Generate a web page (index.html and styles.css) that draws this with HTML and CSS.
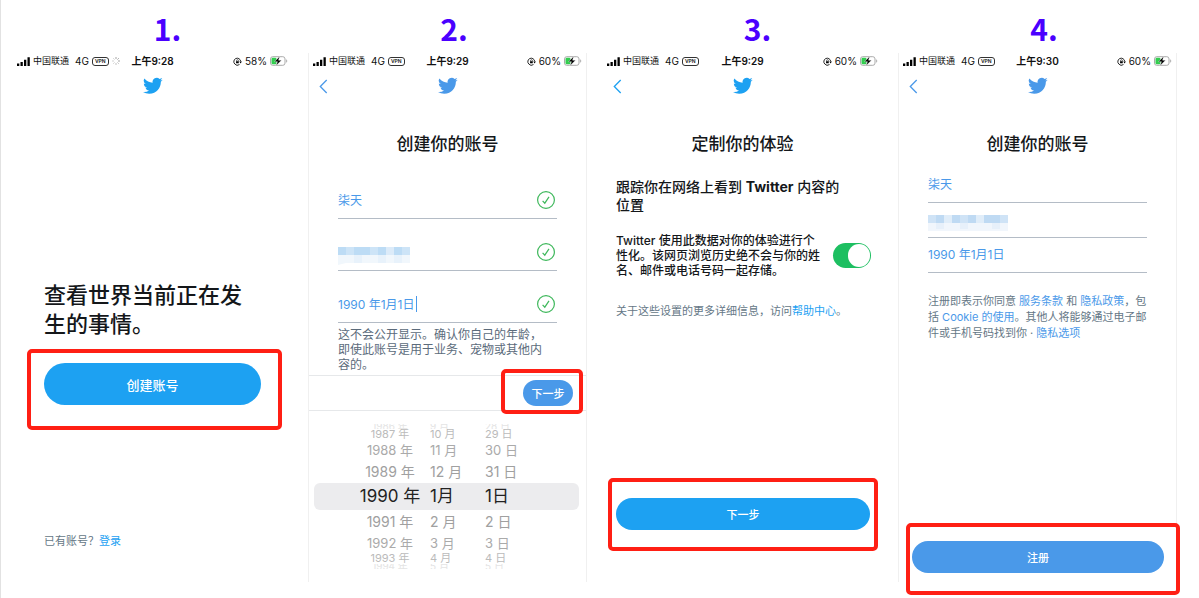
FILE: index.html
```html
<!DOCTYPE html>
<html lang="zh-CN">
<head>
<meta charset="utf-8">
<meta name="viewport" content="width=device-width, initial-scale=1">
<title>创建你的账号</title>
<link rel="stylesheet" href="styles.css">
</head>
<body>
<svg class="sprite" aria-hidden="true">
  <symbol id="bird" viewBox="0 0 24 20"><path d="M23.6 2.4a9.7 9.7 0 0 1-2.8.8A4.8 4.8 0 0 0 23 .5a9.600 9.600 0 0 1-3.100 1.200A4.850 4.850 0 0 0 11.600 6.100 13.800 13.800 0 0 1 1.700 1a4.850 4.850 0 0 0 1.500 6.500 4.800 4.800 0 0 1-2.200-.6v.1a4.850 4.850 0 0 0 3.900 4.800 4.900 4.900 0 0 1-2.200.1 4.850 4.850 0 0 0 4.500 3.400A9.700 9.700 0 0 1 0 17.200a13.700 13.700 0 0 0 7.500 2.200c9 0 13.900-7.400 13.900-13.900v-.6a10 10 0 0 0 2.200-2.500z"/></symbol>
  <symbol id="signal" viewBox="0 0 13 9"><path d="M0 6.500h2.300V9H0zM3.500 5h2.300v4H3.500zM7 2.700h2.300V9H7zM10.500.3h2.300V9h-2.300z"/></symbol>
  <symbol id="lock" viewBox="0 0 10 10"><path d="M2 7.800A3.800 3.800 0 1 1 8.500 4.800M2 7.800a3.800 3.800 0 0 0 5.200.6" fill="none" stroke="currentColor"/><path d="M7 5h2.900L8.500 7.200zM3.400 4.600h3V7h-3z"/><path d="M4 4.800V4a1 1 0 0 1 2 0v.8" fill="none" stroke="currentColor" stroke-width=".7"/></symbol>
  <symbol id="battery" viewBox="0 0 18 10"><rect x=".5" y=".7" width="14.500" height="8.600" rx="2.200" fill="#fff" stroke="#aaa"/><rect x="1.500" y="1.700" width="5" height="6.600" rx="1.200" fill="#32cd4f"/><path d="M16.200 3.300c1.400.5 1.400 2.900 0 3.400z" fill="#aaa"/><path d="M9.700.3 4.500 5.700h2.900L6 9.800l5.500-5.600H8.600z" stroke="#fff" stroke-width=".4"/></symbol>
  <symbol id="back" viewBox="0 0 9 15"><path d="M7.700 1 1.300 7.500 7.700 14" fill="none" stroke="currentColor" stroke-width="1.300"/></symbol>
  <symbol id="check" viewBox="0 0 18 18"><g fill="none" stroke="#3fb85c" stroke-width="1.200"><circle cx="9" cy="9" r="8.400"/><path d="m5.600 9.800 2.200 2.400 4.200-6.300"/></g></symbol>
  <symbol id="spinner" viewBox="0 0 8 8"><g stroke="#999" stroke-width=".9"><path d="M4 0v2M6.800 1.200 5.400 2.600M8 4H6"/><path d="M6.800 6.800 5.400 5.400M4 8V6" stroke="#bbb"/><path d="M1.200 6.800l1.400-1.400M0 4h2M1.200 1.200l1.400 1.400" stroke="#ccc"/></g></symbol>
</svg>

<main class="board">
  <section class="step">
    <h2 class="step-no wide">1.</h2>
    <div class="phone">
      <header class="status">
        <div class="carrier"><svg class="signal"><use href="#signal"/></svg><span class="operator">中国联通</span><span>4G</span><span class="vpn">VPN</span><svg class="spinner"><use href="#spinner"/></svg></div>
        <time class="clock">上午9:28</time>
        <div class="power"><svg class="lock"><use href="#lock"/></svg><span>58%</span><svg class="battery"><use href="#battery"/></svg></div>
      </header>
      <nav class="nav"><span></span><svg class="bird"><use href="#bird"/></svg></nav>
      <div class="welcome">
        <h1 class="slogan">查看世界当前正在发<br>生的事情。</h1>
        <div class="mark mark-create"><button class="button tall" type="button">创建账号</button></div>
        <p class="signin">已有账号？<a href="#login">登录</a></p>
      </div>
    </div>
  </section>

  <section class="step">
    <h2 class="step-no">2.</h2>
    <div class="phone framed soft">
      <header class="status">
        <div class="carrier"><svg class="signal"><use href="#signal"/></svg><span class="operator">中国联通</span><span>4G</span><span class="vpn">VPN</span></div>
        <time class="clock">上午9:29</time>
        <div class="power"><svg class="lock"><use href="#lock"/></svg><span>60%</span><svg class="battery"><use href="#battery"/></svg></div>
      </header>
      <nav class="nav"><button class="back" type="button" aria-label="返回"><svg><use href="#back"/></svg></button><svg class="bird"><use href="#bird"/></svg></nav>
      <h1 class="title">创建你的账号</h1>
      <form class="fields roomy">
        <div class="field"><input type="text" aria-label="姓名" value="柒天"><svg class="check"><use href="#check"/></svg></div>
        <div class="field">
          <svg class="mosaic" viewBox="0 0 80 18" aria-hidden="true"><path fill="#bddcf5" d="M0 0h72v8H0z"/><path fill="#cde4f7" d="M8 0h8v8H8zM32 0h8v8h-8zM64 0h8v8h-8z"/><path fill="#dcebf9" d="M48 0h8v8h-8z"/><path fill="#f1f7fc" d="M0 8h72v8H8l-8 2z"/><path fill="#e8f2fb" d="M16 8h8v8h-8zM40 8h8v8h-8zM56 8h8v8h-8z"/></svg>
          <svg class="check"><use href="#check"/></svg></div>
        <div class="field"><input class="birth" type="text" aria-label="出生日期" value="1990 年1月1日"><span class="caret"></span><svg class="check"><use href="#check"/></svg></div>
      </form>
      <p class="hint">这不会公开显示。确认你自己的年龄，<br>即使此账号是用于业务、宠物或其他内<br>容的。</p>
      <div class="toolbar"><div class="mark mark-next"><button class="button small" type="button">下一步</button></div></div>
      <ul class="picker">
        <li class="edge"><span>1986 年</span><span>9 月</span><span>28 日</span></li>
        <li class="far"><span>1987 年</span><span>10 月</span><span>29 日</span></li>
        <li class="mid"><span>1988 年</span><span>11 月</span><span>30 日</span></li>
        <li class="near"><span>1989 年</span><span>12 月</span><span>31 日</span></li>
        <li class="current"><span>1990 年</span><span>1月</span><span>1日</span></li>
        <li class="near"><span>1991 年</span><span>2 月</span><span>2 日</span></li>
        <li class="mid"><span>1992 年</span><span>3 月</span><span>3 日</span></li>
        <li class="far"><span>1993 年</span><span>4 月</span><span>4 日</span></li>
        <li class="edge"><span>1994 年</span><span>5 月</span><span>5 日</span></li>
      </ul>
    </div>
  </section>

  <section class="step">
    <h2 class="step-no wide">3.</h2>
    <div class="phone">
      <header class="status">
        <div class="carrier"><svg class="signal"><use href="#signal"/></svg><span class="operator">中国联通</span><span>4G</span><span class="vpn">VPN</span></div>
        <time class="clock">上午9:29</time>
        <div class="power"><svg class="lock"><use href="#lock"/></svg><span>60%</span><svg class="battery"><use href="#battery"/></svg></div>
      </header>
      <nav class="nav"><button class="back" type="button" aria-label="返回"><svg><use href="#back"/></svg></button><svg class="bird"><use href="#bird"/></svg></nav>
      <h1 class="title">定制你的体验</h1>
      <div class="custom">
        <h2 class="subtitle">跟踪你在网络上看到 <b>Twitter</b> 内容的<br>位置</h2>
        <div class="setting">
          <label for="track">Twitter 使用此数据对你的体验进行个<br>性化。该网页浏览历史绝不会与你的姓<br>名、邮件或电话号码一起存储。</label>
          <input class="switch" id="track" type="checkbox" role="switch" checked>
        </div>
        <p class="more">关于这些设置的更多详细信息，访问<a href="#help">帮助中心</a>。</p>
      </div>
      <div class="bottom raised"><div class="mark mark-step"><button class="button" type="button">下一步</button></div></div>
    </div>
  </section>

  <section class="step">
    <h2 class="step-no">4.</h2>
    <div class="phone framed soft">
      <header class="status">
        <div class="carrier"><svg class="signal"><use href="#signal"/></svg><span class="operator">中国联通</span><span>4G</span><span class="vpn">VPN</span></div>
        <time class="clock">上午9:30</time>
        <div class="power"><svg class="lock"><use href="#lock"/></svg><span>60%</span><svg class="battery"><use href="#battery"/></svg></div>
      </header>
      <nav class="nav"><button class="back" type="button" aria-label="返回"><svg><use href="#back"/></svg></button><svg class="bird"><use href="#bird"/></svg></nav>
      <h1 class="title">创建你的账号</h1>
      <form class="fields">
        <div class="field"><input type="text" aria-label="姓名" value="柒天"></div>
        <div class="field">
          <svg class="mosaic" viewBox="0 0 80 18" aria-hidden="true"><path fill="#cfe3f6" d="M0 0h80v8H0z"/><path fill="#bfdaf3" d="M8 0h8v8H8zM24 0h8v8h-8zM40 0h8v8h-8zM56 0h16v8H56z"/><path fill="#e0edf9" d="M16 0h8v8h-8zM48 0h8v8h-8z"/><path fill="#f1f6fc" d="M0 8h80v8H0z"/><path fill="#e7f0fa" d="M8 8h8v6H8zM32 8h8v6h-8zM64 8h8v6h-8z"/></svg></div>
        <div class="field"><input type="text" aria-label="出生日期" value="1990 年1月1日"></div>
      </form>
      <p class="terms">注册即表示你同意 <a href="#tos">服务条款</a> 和 <a href="#privacy">隐私政策</a>，包<br>括 <a href="#cookie">Cookie 的使用</a>。其他人将能够通过电子邮<br>件或手机号码找到你 · <a href="#options">隐私选项</a></p>
      <div class="bottom"><div class="mark mark-signup"><button class="button" type="button">注册</button></div></div>
    </div>
  </section>
</main>
</body>
</html>
```
FILE: styles.css
```css
* { box-sizing: border-box; }

body {
  margin: 0;
  border-left: 1px solid #e2e2e2;
  background: #fff;
  color: #14171a;
  font-family: Inter, "Noto Sans CJK SC", sans-serif;
}

h1, h2, p, ul { margin: 0; padding: 0; }
ul { list-style: none; }
svg { display: block; flex: none; }
a { color: var(--blue); text-decoration: none; }
button, input { font-family: inherit; }
.sprite { display: none; }

.board {
  display: grid;
  grid-template-columns: repeat(4, minmax(0, 1fr));
  gap: 16px;
  min-height: 100vh;
  padding: 0 22px 16px 12px;
}

.step { display: flex; flex-direction: column; }

.step-no {
  height: 53px;
  padding: 5px 0 0 13px;
  color: #4a00ff;
  font: 700 30px/46px "Noto Sans CJK SC", sans-serif;
  text-align: center;
}
.step-no.wide { padding-left: 30px; }

.phone {
  --blue: #1da1f2;
  display: flex;
  flex: 1;
  flex-direction: column;
}
.phone.soft { --blue: #4a99e9; }
.phone.framed { border: solid #f0f0f0; border-width: 0 1px; }

/* Status bar */
.status {
  display: grid;
  grid-template-columns: 1fr auto 1fr;
  align-items: center;
  height: 16px;
  padding: 0 4px;
  color: #111;
  font-size: 10px;
  line-height: 16px;
}
.carrier, .power { display: flex; align-items: center; gap: 3px; }
.power { justify-content: flex-end; }
.operator { margin-right: 3px; font-size: 9px; }
.clock { font-weight: 600; }
.vpn {
  padding: 0 2px;
  border: 1px solid #333;
  border-radius: 3px;
  font-size: 5px;
  font-weight: 600;
  line-height: 7px;
}
.signal { width: 13px; height: 9px; }
.spinner { width: 8px; height: 8px; }
.lock { width: 9px; height: 9px; }
.battery { width: 18px; height: 10px; }

.nav {
  display: grid;
  grid-template-columns: 1fr auto 1fr;
  align-items: center;
  height: 34px;
  padding: 0 10px;
  color: var(--blue);
}
.bird { width: 20px; height: 18px; fill: var(--blue); }
.back { justify-self: start; padding: 0; border: 0; background: none; color: inherit; }
.back svg { width: 9px; height: 15px; }

.title {
  margin-top: 29px;
  font-size: 17px;
  font-weight: 500;
  line-height: 24px;
  text-align: center;
}

/* Buttons and the red frames round them */
.button {
  display: block;
  width: 100%;
  height: 32px;
  padding: 0;
  border: 0;
  border-radius: 16px;
  background: var(--blue);
  color: #fff;
  font-size: 11px;
  font-weight: 500;
}
.button.tall { height: 42px; border-radius: 21px; font-size: 13px; }
.button.small { width: 50px; height: 26px; }

.mark { position: relative; }
.mark::after {
  position: absolute;
  inset: var(--reach);
  border: 4px solid #ff1f14;
  border-radius: 5px;
  content: "";
  pointer-events: none;
}
.mark-create { --reach: -14px -21px -25px -17px; }
.mark-next { --reach: -11px -10px -8px -22px; }
.mark-step { --reach: -20px -8px -21px -8px; }
.mark-signup { --reach: -18px -16px -22px -6px; }

.bottom { margin-top: auto; padding: 0 12px 9px 13px; }
.bottom.raised { padding-bottom: 52px; }

/* Welcome */
.welcome { display: flex; flex: 1; flex-direction: column; padding: 178px 31px 33px; }
.slogan { margin-bottom: 24px; font-size: 22px; font-weight: 500; line-height: 29px; white-space: nowrap; }
.signin { margin-top: auto; color: #657786; font-size: 11px; line-height: 16px; }

/* Form */
.fields { padding: 12px 29px 0; }
.field {
  display: flex;
  align-items: center;
  height: 35px;
  border-bottom: 1px solid #b4bcc6;
}
.field input {
  flex: 1;
  min-width: 0;
  padding: 0 0 3px;
  border: 0;
  outline: 0;
  background: none;
  color: var(--blue);
  font-size: 12px;
}
.roomy { padding-top: 11px; }
.roomy .field { height: 52px; padding: 14px 2px 0 0; }
.roomy .field input { padding-bottom: 0; }
.field .birth { flex: none; width: 78px; }
.caret { width: 1px; height: 16px; background: var(--blue); }
.check { width: 18px; height: 18px; margin-left: auto; }
.mosaic { width: 80px; height: 18px; margin-top: 8px; }

.hint { margin: 4px 29px 3px; color: #5b6b7b; font-size: 12px; line-height: 15px; white-space: nowrap; }

.toolbar {
  display: flex;
  align-items: center;
  justify-content: flex-end;
  height: 36px;
  padding-right: 13px;
  border: solid #e6e8ea;
  border-width: 1px 0;
}

/* Date picker */
.picker { padding: 13px 7px 0 5px; }
.picker li {
  display: grid;
  grid-template-columns: 80px 55px 1fr;
  align-items: center;
  padding-left: 36px;
  overflow: hidden;
  border-radius: 6px;
  white-space: nowrap;
}
.picker span:first-child { text-align: center; }
.picker .edge { height: 5px; color: #e4e4e4; font-size: 10px; line-height: 5px; }
.picker .far { height: 11px; color: #bbb; font-size: 11px; line-height: 11px; }
.picker .mid { height: 20px; color: #aaa; font-size: 13px; line-height: 20px; }
.picker .near { height: 23px; color: #a0a0a0; font-size: 14px; line-height: 23px; }
.picker .current { height: 27px; background: #ececee; color: #222; font-size: 17px; line-height: 27px; }

/* Customisation */
.custom { padding: 22px 11px 0 13px; }
.subtitle { font-size: 14px; font-weight: 500; line-height: 18px; white-space: nowrap; }
.subtitle b { font-weight: 700; }
.setting {
  display: flex;
  align-items: center;
  justify-content: space-between;
  margin: 19px 0 25px;
  font-size: 12px;
  font-weight: 500;
  line-height: 15px;
  white-space: nowrap;
}
.switch {
  appearance: none;
  flex: none;
  width: 38px;
  height: 25px;
  margin: 0;
  padding: 1px;
  border-radius: 13px;
  background: #1dbf61;
}
.switch::before {
  display: block;
  width: 22px;
  height: 23px;
  margin-left: auto;
  border-radius: 12px;
  background: #fff;
  content: "";
}
.more, .terms { color: #657786; font-size: 11px; line-height: 16px; white-space: nowrap; }
.terms { margin: 20px 29px 0; }
```
